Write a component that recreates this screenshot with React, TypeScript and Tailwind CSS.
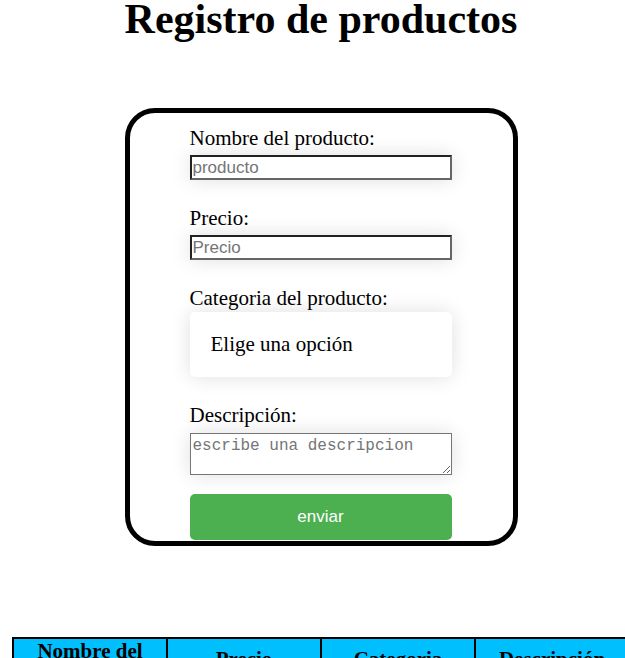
import React from "react";

const inputCls =
	"block w-full h-[25px] mt-[5px] px-[1px] border-2 border-t-[#222] border-l-[#222] border-r-[#666] border-b-[#666] bg-white font-['Liberation_Sans',Arial,sans-serif] text-[17px] text-black placeholder:text-[#757575] shadow-[0_0_20px_rgba(0,0,0,0.13)] outline-none";

const Label = ({ text, className }: { text: string; className?: string }) => (
	<label className={"block text-[21px] leading-[23px] " + (className || "")}>{text}</label>
);

const App = () => {
	const headers = ["Precio", "Categoria", "Descripción"];

	return (
		<div className="w-[625px] h-[658px] overflow-hidden bg-white text-black font-['Liberation_Serif','Times_New_Roman',serif]">
			<div className="w-[642px]">
				<h1 className="text-center text-[42px] font-bold leading-[38px]">Registro de productos</h1>

				<form className="w-[393px] mx-auto mt-[70px] border-[5px] border-black rounded-[30px] pl-[60px] pr-[61px] pt-[14px] pb-[1px]">
					<Label text="Nombre del producto:" />
					<input type="text" placeholder="producto" className={inputCls} />

					<Label text="Precio:" className="mt-[27px]" />
					<input type="text" placeholder="Precio" className={inputCls} />

					<Label text="Categoria del producto:" className="mt-[27px]" />
					<select
						defaultValue=""
						className="block w-full h-[65px] mt-[2px] px-[21px] appearance-none bg-white rounded-[5px] text-[21px] text-black shadow-[0_0_20px_rgba(0,0,0,0.13)] outline-none"
					>
						<option value="">Elige una opción</option>
						<option value="ropa">Ropa</option>
						<option value="tecnologia">Tecnología</option>
					</select>

					<Label text="Descripción:" className="mt-[27px]" />
					<textarea
						placeholder="escribe una descripcion"
						className="block w-full h-[42px] mt-[6px] px-[2px] pt-[3px] border border-[#767676] bg-white font-['Liberation_Mono',monospace] text-[16px] leading-[18px] placeholder:text-[#757575] shadow-[0_0_20px_rgba(0,0,0,0.13)] outline-none"
					/>

					<button
						type="button"
						className="block w-full h-[46px] mt-[19px] rounded-[5px] bg-[#4CAF50] text-white font-['Liberation_Sans',Arial,sans-serif] text-[17px]"
					>
						enviar
					</button>
				</form>

				<table className="w-[618px] mx-auto mt-[91px] border-collapse">
					<thead>
						<tr>
							<th className="w-1/4 border-2 border-black bg-[#00BFFF] px-[1px] pt-[1px] pb-[1px] text-[21px] leading-[23px] font-bold text-center align-top">
								Nombre del producto
							</th>
							{headers.map((h, _i) => (
								<th
									key={_i}
									className="w-1/4 border-2 border-black bg-[#00BFFF] px-[1px] pt-[9px] text-[21px] leading-[23px] font-bold text-center align-top"
								>
									{h}
								</th>
							))}
						</tr>
					</thead>
				</table>
			</div>
		</div>
	);
};

export default App;
